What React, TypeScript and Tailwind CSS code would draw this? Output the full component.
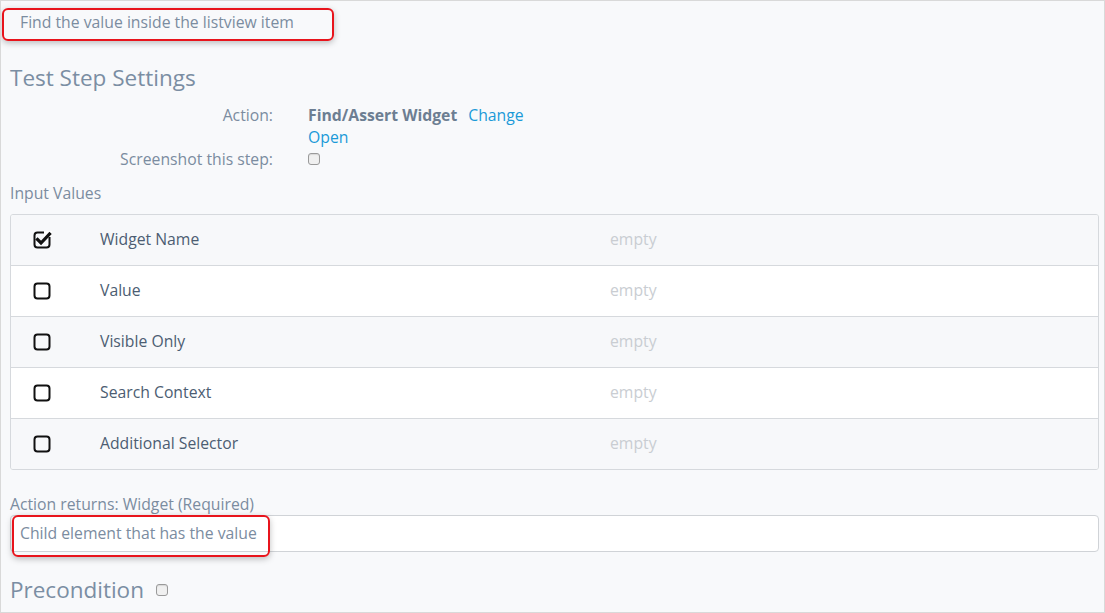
import { Fragment } from "react";

const inputs = [
  { name: "Widget Name", checked: true },
  { name: "Value", checked: false },
  { name: "Visible Only", checked: false },
  { name: "Search Context", checked: false },
  { name: "Additional Selector", checked: false },
];

function CheckIcon({ checked }: { checked: boolean }) {
  return (
    <svg width="19" height="18" viewBox="0 0 19 18" className="block">
      <rect x="1.5" y="1.5" width="15" height="15" rx="3" fill="none" stroke="#111" strokeWidth="2" />
      {checked && (
        <>
          <rect x="11" y="0" width="8" height="6" fill="#fff" />
          <path d="M4.5 8.5 L8 12 L16.5 3" fill="none" stroke="#111" strokeWidth="3.2" strokeLinecap="square" />
        </>
      )}
    </svg>
  );
}

function SmallBox() {
  return <span className="inline-block w-[12px] h-[12px] rounded-[3px] border border-[#9a9a9a] bg-[#f0f0f0] shadow-[inset_0_1px_1px_rgba(0,0,0,0.1)]" />;
}

export default function App() {
  return (
    <div
      className="w-[1105px] h-[613px] overflow-hidden bg-[#f8f9fb] border border-[#d9d9d9] pl-[9px] pr-[3px] text-[#7b8ca0]"
      style={{ fontFamily: '"Open Sans", sans-serif' }}
    >
      {/* step description */}
      <div className="mt-[7px] -ml-[8px] w-[332px] h-[33px] rounded-[6px] border-2 border-[#e8141c] shadow-[0_2px_6px_rgba(0,0,0,0.25)] pl-[16px] pb-[3px] flex items-center text-[15.75px]">
        Find the value inside the listview item
      </div>

      <h2 className="mt-[22px] text-[22.5px] leading-[30px] text-[#7b8ea3]">Test Step Settings</h2>

      <div className="mt-[11px] grid grid-cols-[263px_1fr] gap-x-[35px] text-[15.75px] leading-[22px]">
        <div className="text-right">Action:</div>
        <div>
          <span className="font-bold text-[#6d7e92]">Find/Assert Widget</span>
          <span className="ml-[11px] text-[#1b9ad8]">Change</span>
        </div>
        <div />
        <div className="text-[#1b9ad8]">Open</div>
        <div className="text-right">Screenshot this step:</div>
        <div className="flex items-center">
          <SmallBox />
        </div>
      </div>

      <div className="mt-[12px] text-[15.75px] leading-[22px]">Input Values</div>

      <div className="mt-[10px] mr-[2px] rounded-[3px] border border-[#d6d9dd] overflow-hidden">
        {inputs.map((row, i) => (
          <Fragment key={row.name}>
            <div
              className={`flex items-center text-[15.75px] ${i % 2 === 0 ? "bg-[#f7f8fa]" : "bg-white"} ${i > 0 ? "h-[51px] border-t border-[#d6d9dd]" : "h-[50px]"}`}
            >
              <div className="w-[89px] pl-[22px]">
                <CheckIcon checked={row.checked} />
              </div>
              <div className="w-[510px] text-[#4c5d72]">{row.name}</div>
              <div className="text-[#c9cdd2]">empty</div>
            </div>
          </Fragment>
        ))}
      </div>

      <div className="mt-[23px] text-[15.75px] leading-[22px]">Action returns: Widget (Required)</div>

      <div className="relative mr-[2px] h-[37px] rounded-[4px] border border-[#d0d3d7] bg-white flex items-center pl-[9px] text-[15.75px]">
        Child element that has the value
        <div className="absolute left-[1px] top-[-1px] w-[258px] h-[42px] rounded-[6px] border-2 border-[#e8141c] shadow-[0_2px_6px_rgba(0,0,0,0.25)]" />
      </div>

      <div className="mt-[22px] flex items-center gap-[12px]">
        <span className="text-[22.5px] leading-[32px] text-[#7b8ea3]">Precondition</span>
        <SmallBox />
      </div>
    </div>
  );
}
